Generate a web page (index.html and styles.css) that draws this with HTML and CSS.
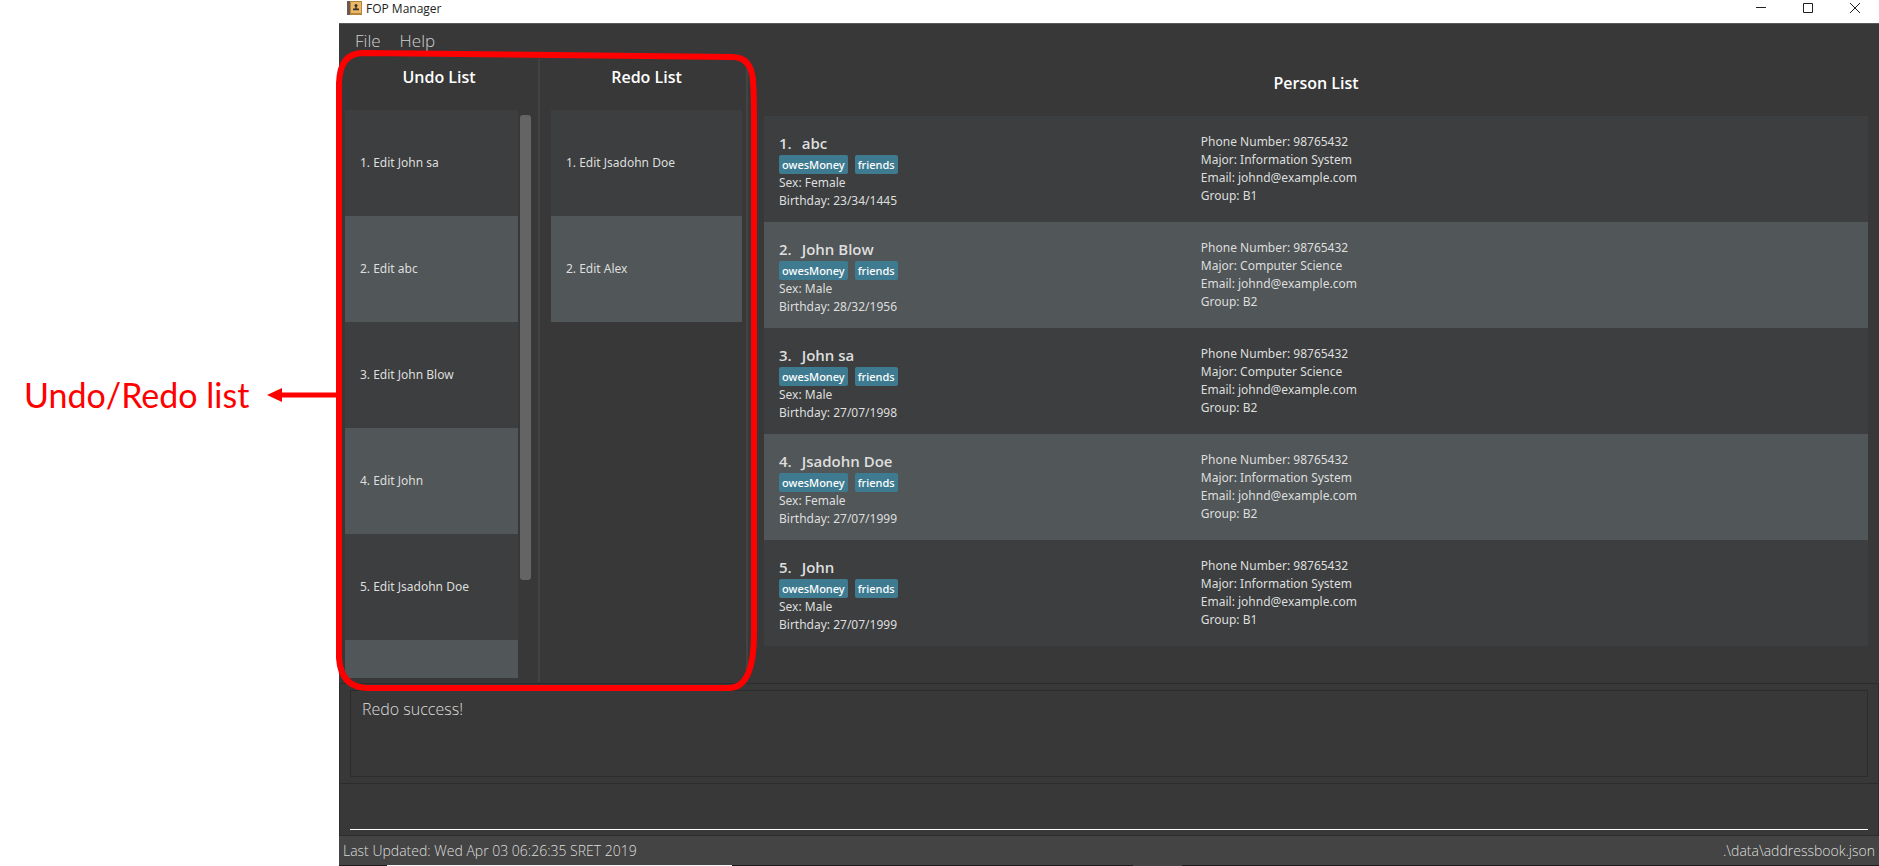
FILE: index.html
```
<!DOCTYPE html>
<html lang="en">
<head>
<meta charset="utf-8">
<title>FOP Manager</title>
<link rel="stylesheet" href="styles.css">
</head>
<body>
<div class="page">
  <aside class="callout">
    <span class="callout-text">Undo/Redo list</span>
    <svg class="callout-arrow" viewBox="0 0 72 16" aria-hidden="true"><path d="M0 8 15 1V15Z" fill="#f00"/><path d="M13 8H72" stroke="#f00" stroke-width="5"/></svg>
  </aside>

  <div class="window">
    <header class="titlebar">
      <svg class="app-icon" viewBox="0 0 16 16" aria-hidden="true">
        <rect x="0" y="1" width="15" height="14" fill="#b98338"/>
        <rect x="4" y="2" width="10" height="11" fill="#e9b868"/>
        <rect x="0" y="1" width="3" height="14" fill="#6a5a52"/>
        <circle cx="9" cy="5.500" r="1.500" fill="#3b3026"/>
        <path d="M8.300 6h1.400v2.500h2.300v1.800h-6V8.500h2.300z" fill="#3b3026"/>
      </svg>
      <span class="app-title">FOP Manager</span>
      <div class="window-buttons">
        <button type="button" aria-label="Minimize"><svg viewBox="0 0 12 12"><path d="M1 5.500H11" /></svg></button>
        <button type="button" aria-label="Maximize"><svg viewBox="0 0 12 12"><path d="M1.500 1.500H10.500V10.500H1.500Z"/></svg></button>
        <button type="button" aria-label="Close"><svg viewBox="0 0 12 12"><path d="M1 1 11 11M11 1 1 11"/></svg></button>
      </div>
    </header>

    <nav class="menubar">
      <button type="button">File</button>
      <button type="button">Help</button>
    </nav>

    <main class="content">
      <section class="history">
        <div class="history-panel undo">
          <h2>Undo List</h2>
          <div class="scroll-area">
            <ul class="cells">
              <li>1. Edit John sa</li>
              <li>2. Edit abc</li>
              <li>3. Edit John Blow</li>
              <li>4. Edit John</li>
              <li>5. Edit Jsadohn Doe</li>
              <li></li>
            </ul>
            <div class="scrollbar"><div class="thumb"></div></div>
          </div>
        </div>
        <div class="history-panel redo">
          <h2>Redo List</h2>
          <ul class="cells">
            <li>1. Edit Jsadohn Doe</li>
            <li>2. Edit Alex</li>
          </ul>
        </div>
        <svg class="highlight" viewBox="0 0 428 644" preserveAspectRatio="none" aria-hidden="true">
          <path d="M30 5 399 9Q418 9 420 32Q421 45 421 70V585Q421 640 396 640H35Q8 640 6 610V35Q7 5 30 5Z"/>
        </svg>
      </section>

      <section class="persons">
        <h2>Person List</h2>
        <ul class="person-cells">
          <li>
            <div class="who"><h3><span>1.</span><span>abc</span></h3><div class="tags"><span>owesMoney</span><span>friends</span></div><p>Sex: Female</p><p>Birthday: 23/34/1445</p></div>
            <div class="details"><p>Phone Number: 98765432</p><p>Major: Information System</p><p>Email: johnd@example.com</p><p>Group: B1</p></div>
          </li>
          <li>
            <div class="who"><h3><span>2.</span><span>John Blow</span></h3><div class="tags"><span>owesMoney</span><span>friends</span></div><p>Sex: Male</p><p>Birthday: 28/32/1956</p></div>
            <div class="details"><p>Phone Number: 98765432</p><p>Major: Computer Science</p><p>Email: johnd@example.com</p><p>Group: B2</p></div>
          </li>
          <li>
            <div class="who"><h3><span>3.</span><span>John sa</span></h3><div class="tags"><span>owesMoney</span><span>friends</span></div><p>Sex: Male</p><p>Birthday: 27/07/1998</p></div>
            <div class="details"><p>Phone Number: 98765432</p><p>Major: Computer Science</p><p>Email: johnd@example.com</p><p>Group: B2</p></div>
          </li>
          <li>
            <div class="who"><h3><span>4.</span><span>Jsadohn Doe</span></h3><div class="tags"><span>owesMoney</span><span>friends</span></div><p>Sex: Female</p><p>Birthday: 27/07/1999</p></div>
            <div class="details"><p>Phone Number: 98765432</p><p>Major: Information System</p><p>Email: johnd@example.com</p><p>Group: B2</p></div>
          </li>
          <li>
            <div class="who"><h3><span>5.</span><span>John</span></h3><div class="tags"><span>owesMoney</span><span>friends</span></div><p>Sex: Male</p><p>Birthday: 27/07/1999</p></div>
            <div class="details"><p>Phone Number: 98765432</p><p>Major: Information System</p><p>Email: johnd@example.com</p><p>Group: B1</p></div>
          </li>
        </ul>
      </section>
    </main>

    <section class="result">
      <textarea readonly aria-label="Result">Redo success!</textarea>
    </section>
    <section class="command">
      <input type="text" aria-label="Command">
    </section>
    <footer class="statusbar">
      <span>Last Updated: Wed Apr 03 06:26:35 SRET 2019</span>
      <span>.\data\addressbook.json</span>
    </footer>
    <div class="desktop-edge"><i class="lead"></i><i class="light"></i><i class="gap"></i><i class="mid"></i></div>
  </div>
</div>
</body>
</html>
```
FILE: styles.css
```
* { box-sizing: border-box; }
body {
  margin: 0;
  background: #fff;
  font-family: "Noto Sans", "Open Sans", sans-serif;
  font-size: 12px;
  line-height: 18px;
  color: #dedede;
}
h2, h3, p, ul { margin: 0; padding: 0; font-weight: 400; }
ul { list-style: none; }
button, input, textarea { font: inherit; color: inherit; border: 0; background: none; padding: 0; }

.page { display: grid; grid-template-columns: 339px minmax(0, 1fr); height: 100vh; overflow: hidden; }

.callout {
  display: flex;
  align-items: center;
  justify-content: space-between;
  padding: 0 0 77px 24px;
  color: #f00;
  font-family: Lato, sans-serif;
  font-size: 34px;
  line-height: 40px;
  white-space: nowrap;
}
.callout-arrow { width: 72px; height: 16px; }

.window { display: flex; flex-direction: column; min-height: 0; min-width: 0; background: #383838; }

.titlebar { display: flex; align-items: flex-start; height: 23px; background: #fff; color: #222; padding: 0 18px 0 8px; font-family: "Open Sans", sans-serif; line-height: 17px; }
.app-icon { width: 16px; height: 16px; margin-right: 3px; }
.window-buttons { display: flex; gap: 35px; margin-left: auto; padding-top: 2px; }
.window-buttons button { width: 12px; height: 12px; display: flex; }
.window-buttons svg { width: 12px; height: 12px; fill: none; stroke: #222; stroke-width: 1; }

.menubar { display: flex; gap: 19px; height: 35px; padding: 6px 16px 0; border-top: 1px solid #5a5a5a; font-family: "Open Sans", sans-serif; font-size: 17px; line-height: 22px; font-weight: 300; color: #d0d0d0; }
.menubar button { display: block; height: 22px; }

.content { display: flex; flex: 1; min-height: 0; }
h2 { text-align: center; color: #fff; font-family: "Open Sans", sans-serif; font-size: 16px; line-height: 22px; font-weight: 600; }

.history { position: relative; display: flex; width: 409px; padding: 1px 0; }
.history-panel { display: flex; flex-direction: column; min-height: 0; padding: 7px 5px 4px; border-right: 2px solid #434343; }
.history-panel h2 { margin-bottom: 22px; }
.undo { width: 201px; padding-left: 6px; }
.redo { flex: 1; padding-left: 11px; padding-right: 4px; }
.scroll-area { display: flex; flex: 1; min-height: 0; }
.cells { flex: 1; min-height: 0; overflow: hidden; }
.cells li { display: flex; align-items: center; height: 106px; padding: 0 15px; background: #3c3e3f; }
.cells li:nth-child(even), .person-cells li:nth-child(even) { background: #515658; }
.scrollbar { width: 15px; padding: 5px 2px 98px; }
.thumb { height: 100%; border-radius: 3px; background: #646464; }
.highlight { position: absolute; left: -6px; top: -10px; width: 428px; height: 644px; z-index: 1; fill: none; stroke: #f00; stroke-width: 6; pointer-events: none; }

.persons { flex: 1; min-width: 0; padding: 14px 11px 0 16px; }
.persons h2 { margin-bottom: 22px; }
.person-cells li { display: flex; height: 106px; padding: 17px 15px 0; background: #3c3e3f; }
.who { flex: 0 0 39%; }
.who h3 { display: flex; gap: 10px; font-family: "Open Sans", sans-serif; font-size: 15px; line-height: 20px; font-weight: 600; }
.tags { display: flex; gap: 7px; margin: 2px 0 0; }
.tags span { padding: 0 3px; border-radius: 2px; background: #3e7b91; color: #fff; font-size: 11px; line-height: 19px; font-weight: 500; }
.details { padding: 0 3px; }

.result { height: 101px; padding: 6px 10px 6px; border: 1px solid #2c2c2c; }
.result textarea { display: block; width: 100%; height: 87px; padding: 6px 11px; border: 1px solid #2c2c2c; resize: none; outline: 0; font-family: "Open Sans", sans-serif; font-size: 16px; line-height: 24px; font-weight: 300; }
.command { height: 52px; padding: 0 10px 5px; border: 1px solid #2c2c2c; border-top: 0; }
.command input { display: block; width: 100%; height: 46px; border-bottom: 1px solid #fff; outline: 0; font-size: 16px; }
.statusbar { display: flex; justify-content: space-between; height: 29px; padding: 4px; background: #444; font-family: "Open Sans", sans-serif; font-size: 14px; line-height: 22px; font-weight: 300; }
.desktop-edge { display: flex; height: 1px; background: #1c1c1c; }
.lead { width: 48px; }
.light { width: 345px; background: #f4f4f4; }
.gap { width: 401px; }
.mid { width: 49px; background: #444; }
```
